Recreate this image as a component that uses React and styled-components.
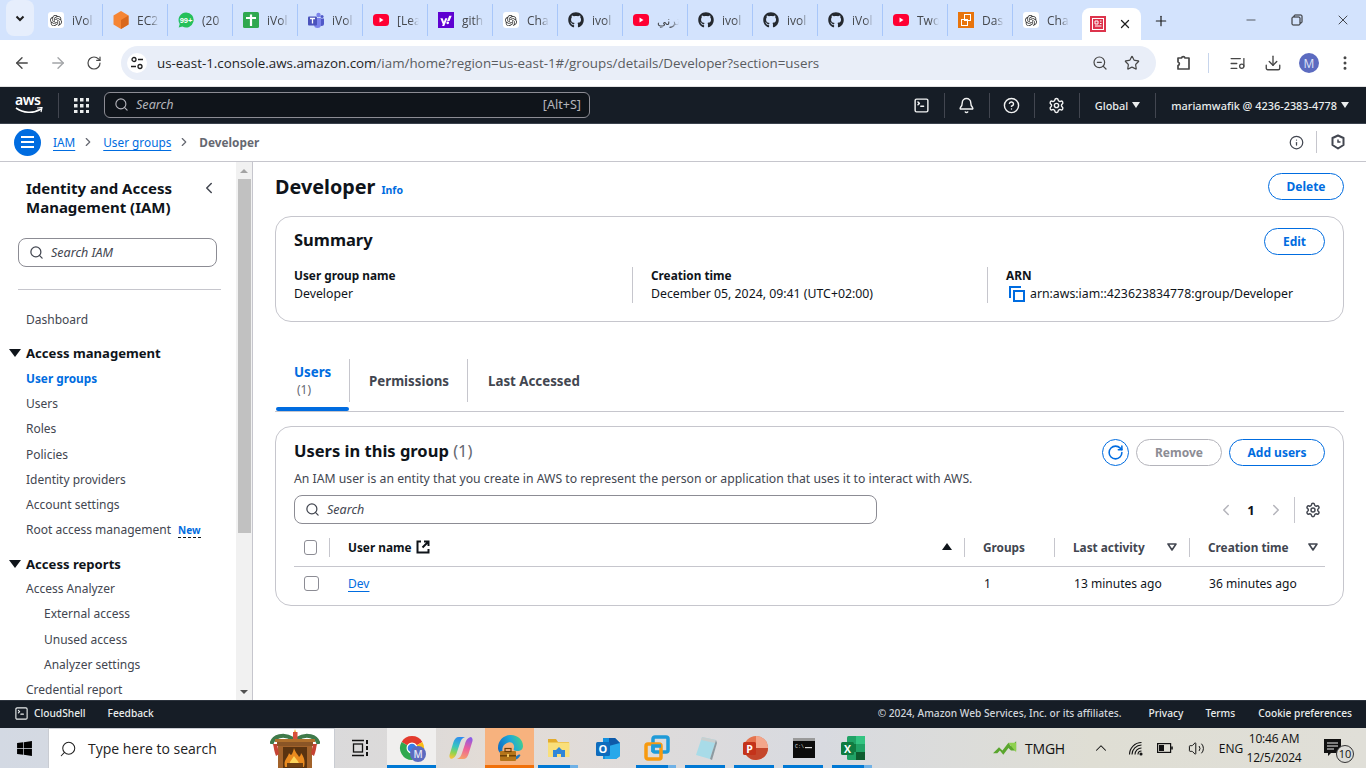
import React from 'react';
import styled, { createGlobalStyle } from 'styled-components';
import {
  ArrowLeft, ArrowRight, RotateCw, ZoomOut, Star, ListMusic, Download, EllipsisVertical,
  Minus, X, Plus, Bell, CircleHelp, Settings, Search, ChevronRight, ChevronLeft, ChevronUp, Info,
  SquareTerminal, Volume2,
} from 'lucide-react';
import { FaGithub, FaWindows, FaYahoo } from 'react-icons/fa';
import { SiOpenai } from 'react-icons/si';

const Global = createGlobalStyle`
  html, body { margin: 0; padding: 0; background: #fff; }
  * { box-sizing: border-box; }
`;

const EMBER = `"Noto Sans", "Open Sans", sans-serif`;
const CHROME = `"Open Sans", "Noto Sans", sans-serif`;

const Page = styled.div`
  width: 1366px;
  height: 768px;
  overflow: hidden;
  display: flex;
  flex-direction: column;
  font-family: ${EMBER};
  color: #0f141a;
`;

/* browser chrome */
const TabStrip = styled.div`
  height: 40px;
  flex: none;
  background: #d3e3fd;
  display: flex;
  align-items: flex-end;
  font-family: ${CHROME};
`;
const TabMenu = styled.div`
  width: 28px;
  height: 36px;
  margin: 0 4px 4px 6px;
  border-radius: 8px;
  background: #e6eefc;
  display: flex;
  align-items: center;
  justify-content: center;
  color: #1f1f1f;
`;
const BrowserTab = styled.div`
  width: 65px;
  height: 32px;
  margin-bottom: 4px;
  padding-left: 10px;
  display: flex;
  align-items: center;
  gap: 8px;
  flex: none;
  font-size: 12px;
  color: #45484d;
  border-right: ${({ $sep }) => ($sep ? '1px solid #a8c7fa' : '1px solid transparent')};
`;
const TabLabel = styled.span`
  width: 22px;
  overflow: hidden;
  white-space: nowrap;
  -webkit-mask-image: linear-gradient(90deg, #000 60%, transparent);
  mask-image: linear-gradient(90deg, #000 60%, transparent);
`;
const ActiveTab = styled.div`
  width: 59px;
  height: 32px;
  margin-left: 4px;
  background: #fff;
  border-radius: 8px 8px 0 0;
  display: flex;
  align-items: center;
  padding-left: 8px;
  gap: 12px;
  color: #1f1f1f;
  flex: none;
`;
const NewTab = styled.div`
  margin: 0 0 11px 12px;
  color: #1f1f1f;
  display: flex;
`;
const WindowButtons = styled.div`
  margin-left: auto;
  display: flex;
  align-self: stretch;
  align-items: center;
`;
const WindowButton = styled.div`
  width: 46px;
  display: flex;
  justify-content: center;
  color: #1f1f1f;
`;
const RestoreIcon = () => (
  <svg width="12" height="12" viewBox="0 0 12 12" fill="none" stroke="#1f1f1f" strokeWidth="1">
    <rect x="1" y="3" width="8" height="8" rx="1" />
    <path d="M3 3V2a1 1 0 0 1 1-1h6a1 1 0 0 1 1 1v6a1 1 0 0 1-1 1H9" />
  </svg>
);

const Toolbar = styled.div`
  height: 47px;
  flex: none;
  background: #fff;
  display: flex;
  align-items: center;
  padding-left: 13px;
  color: #474747;
  border-bottom: 1px solid #e3e3e3;
  font-family: ${CHROME};
`;
const ToolButton = styled.div`
  width: ${({ $w }) => $w || 36}px;
  display: flex;
  justify-content: center;
  color: ${({ $dim }) => ($dim ? '#a3a5a8' : '#474747')};
  flex: none;
`;
const AddressBar = styled.div`
  width: 1035px;
  height: 34px;
  margin-left: 18px;
  border-radius: 17px;
  background: #e9eef8;
  display: flex;
  align-items: center;
  padding: 0 8px 0 6px;
  flex: none;
`;
const SiteChip = styled.div`
  width: 20px;
  height: 20px;
  margin-right: 10px;
  border-radius: 50%;
  background: #fff;
  display: flex;
  align-items: center;
  justify-content: center;
`;
const Url = styled.div`
  font-size: 13.37px;
  color: #5a5c60;
  white-space: nowrap;
  flex: 1;
`;
const UrlHost = styled.span`
  color: #1f1f1f;
`;
const ToolDivider = styled.div`
  width: 1px;
  height: 20px;
  margin-left: -2px;
  margin-right: 1px;
  background: #c7d5ec;
  flex: none;
`;
const Avatar = styled.div`
  width: 20px;
  height: 20px;
  border-radius: 50%;
  background: #5c6bc0;
  color: #dfe3f7;
  font-size: 12px;
  display: flex;
  align-items: center;
  justify-content: center;
`;

/* aws console nav */
const AwsNav = styled.div`
  height: 37px;
  flex: none;
  background: #161d26;
  border-bottom: 1px solid #3a424d;
  display: flex;
  align-items: center;
  color: #e6e8eb;
`;
const AwsLogo = styled.div`
  width: 59px;
  height: 25px;
  padding-left: 15px;
  border-right: 1px solid #424650;
  display: flex;
  flex-direction: column;
  color: #fff;
  font-size: 14px;
  line-height: 14px;
  font-weight: 600;
  letter-spacing: -0.4px;
  flex: none;
`;
const GridButton = styled.div`
  width: 45px;
  display: flex;
  justify-content: center;
  flex: none;
`;
const NavSearch = styled.div`
  width: 486px;
  height: 26px;
  border: 1px solid #8c8c94;
  border-radius: 6px;
  background: #0f141a;
  display: flex;
  align-items: center;
  padding: 0 8px 1px 9px;
  font-size: 12.6px;
  color: #b4b4bb;
  flex: none;
`;
const NavSearchHint = styled.span`
  font-style: italic;
  margin-left: 7px;
  flex: 1;
`;
const NavRight = styled.div`
  margin-left: auto;
  display: flex;
  align-items: center;
  height: 25px;
`;
const NavIcon = styled.div`
  width: 45px;
  height: 25px;
  display: flex;
  align-items: center;
  justify-content: center;
  border-right: 1px solid #424650;
  color: #f2f3f3;
`;
const NavMenu = styled.div`
  height: 25px;
  display: flex;
  align-items: center;
  padding: ${({ $pad }) => $pad};
  font-size: 10.9px;
  font-weight: 500;
  color: #eaeded;
  white-space: nowrap;
  border-right: ${({ $line }) => ($line ? '1px solid #424650' : 'none')};
`;
const Caret = styled.span`
  width: 0;
  height: 0;
  margin-left: 4px;
  border-left: 4px solid transparent;
  border-right: 4px solid transparent;
  border-top: 6px solid #eaeded;
`;

/* breadcrumb */
const Crumbs = styled.div`
  height: 38px;
  flex: none;
  background: #fff;
  border-bottom: 1px solid #c6c6cd;
  display: flex;
  align-items: center;
  padding: 0 0 1px 14px;
  font-size: 11.8px;
`;
const MenuCircle = styled.div`
  width: 27px;
  height: 27px;
  border-radius: 50%;
  background: #006ce0;
  display: flex;
  flex-direction: column;
  align-items: center;
  justify-content: center;
  gap: 3px;
  margin-right: 12px;
`;
const MenuBar = styled.span`
  width: 13px;
  height: 2px;
  background: #fff;
`;
const CrumbLink = styled.a`
  color: #006ce0;
  text-decoration: underline;
  text-underline-offset: 3px;
`;
const CrumbSep = styled.span`
  display: flex;
  color: #656871;
  margin: 0 8px 0 6px;
`;
const CrumbCurrent = styled.span`
  color: #656871;
  font-weight: 700;
`;
const CrumbTools = styled.div`
  margin-left: auto;
  padding-right: 7px;
  display: flex;
  align-items: center;
  height: 22px;
  color: #424650;
`;
const CrumbTool = styled.div`
  width: ${({ $w }) => $w}px;
  height: 22px;
  display: flex;
  align-items: center;
  justify-content: center;
  border-right: ${({ $line }) => ($line ? '1px solid #c6c6cd' : 'none')};
`;

/* body */
const Body = styled.div`
  flex: 1;
  min-height: 0;
  display: flex;
`;
const Sidebar = styled.aside`
  width: 253px;
  flex: none;
  display: flex;
  border-right: 1px solid #c6c6cd;
  overflow: hidden;
`;
const SideNav = styled.nav`
  width: 236px;
  flex: none;
  padding-top: 17px;
  overflow: hidden;
`;
const SideHead = styled.div`
  display: flex;
  justify-content: space-between;
  padding: 0 18px 0 26px;
`;
const SideTitle = styled.div`
  font-size: 15px;
  line-height: 19px;
  font-weight: 700;
  white-space: nowrap;
`;
const SideCollapse = styled.div`
  display: flex;
  color: #424650;
`;
const InputBox = styled.div`
  height: 29px;
  border: 1px solid #8c8c94;
  border-radius: 8px;
  display: flex;
  align-items: center;
  padding-left: 10px;
  color: #424650;
  font-size: 12.5px;
  font-style: italic;
  gap: 7px;
  background: #fff;
`;
const SideSearch = styled(InputBox)`
  width: 199px;
  margin: 21px 0 0 18px;
`;
const SideRule = styled.div`
  height: 1px;
  background: #c6c6cd;
  margin: 22px 15px 17px 18px;
`;
const SideItem = styled.div`
  height: 25.2px;
  line-height: 25.2px;
  font-size: ${({ $active }) => ($active ? 11.8 : 12)}px;
  padding-left: ${({ $indent }) => ($indent ? 44 : 26)}px;
  color: ${({ $active }) => ($active ? '#006ce0' : '#424650')};
  font-weight: ${({ $active }) => ($active ? 700 : 400)};
  white-space: nowrap;
  display: flex;
  align-items: center;
`;
const SideSection = styled.div`
  height: 25.2px;
  margin-top: 8.7px;
  display: flex;
  align-items: center;
  padding-left: 9px;
  font-size: 13.1px;
  font-weight: 700;
  color: #0f141a;
  gap: 5px;
`;
const DownTriangle = styled.span`
  width: 0;
  height: 0;
  border-left: 6px solid transparent;
  border-right: 6px solid transparent;
  border-top: 8px solid #0f141a;
`;
const NewBadge = styled.span`
  color: #006ce0;
  font-size: 10px;
  font-weight: 700;
  margin-left: 7px;
  border-bottom: 1px dashed #0f141a;
  line-height: 13px;
  margin-top: 3px;
`;
const ScrollTrack = styled.div`
  width: 16px;
  flex: none;
  background: #f1f1f1;
  display: flex;
  flex-direction: column;
  align-items: center;
`;
const ScrollUp = styled.div`
  height: 17px;
  width: 100%;
  display: flex;
  align-items: center;
  justify-content: center;
`;
const ScrollThumb = styled.div`
  width: 13px;
  margin-left: 1px;
  height: 354px;
  background: #c1c1c1;
`;
const ScrollDown = styled(ScrollUp)`
  margin-top: auto;
`;
const ArrowUp = styled.span`
  border-left: 4px solid transparent;
  border-right: 4px solid transparent;
  border-bottom: 4px solid #a3a3a3;
`;
const ArrowDown = styled.span`
  border-left: 4px solid transparent;
  border-right: 4px solid transparent;
  border-top: 4px solid #505050;
`;

const Main = styled.main`
  flex: 1;
  min-width: 0;
  padding: 11px 22px 0;
  background: #fff;
`;
const TitleRow = styled.div`
  height: 27px;
  display: flex;
  align-items: center;
`;
const PageTitle = styled.h1`
  margin: 0;
  font-size: 19.8px;
  line-height: 27px;
  font-weight: 700;
`;
const InfoLink = styled.a`
  color: #006ce0;
  font-size: 10.5px;
  font-weight: 700;
  margin: 7px 0 0 6px;
`;
const PillButton = styled.button`
  height: 27px;
  width: ${({ $w }) => $w}px;
  margin-left: ${({ $ml }) => $ml || 0}px;
  border-radius: 14px;
  border: 1px solid ${({ $off }) => ($off ? '#b4b4bb' : '#006ce0')};
  background: #fff;
  color: ${({ $off }) => ($off ? '#8c8c94' : '#006ce0')};
  font: 700 12px ${EMBER};
  padding: 0;
  flex: none;
`;
const PushRight = styled.div`
  margin-left: auto;
  display: flex;
  align-items: center;
`;
const Card = styled.section`
  border: 1px solid #c6c6cd;
  border-radius: 16px;
  background: #fff;
  padding: 11px 18px 0;
`;
const SummaryCard = styled(Card)`
  height: 106px;
  margin-top: 16px;
`;
const CardHead = styled.div`
  height: 27px;
  display: flex;
  align-items: center;
`;
const CardTitle = styled.h2`
  margin: 0 0 3px;
  font-size: 16.5px;
  line-height: 24px;
  font-weight: 700;
`;
const Count = styled.span`
  font-weight: 400;
  color: #656871;
`;
const Fields = styled.div`
  margin-top: 12px;
  display: grid;
  grid-template-columns: 338px 355px 1fr;
  height: 36px;
`;
const Field = styled.div`
  border-left: ${({ $line }) => ($line ? '1px solid #c6c6cd' : 'none')};
  padding-left: ${({ $line }) => ($line ? '18px' : '0')};
  font-size: 12.3px;
  line-height: 18px;
`;
const FieldLabel = styled.div`
  font-weight: 700;
  font-size: 11.8px;
  line-height: 16px;
  margin-bottom: 2px;
`;
const FieldValue = styled.div`
  display: flex;
  align-items: center;
  white-space: nowrap;
`;
const CopyMark = styled.span`
  display: flex;
  margin: 0 5px 0 3px;
`;
const TabBar = styled.div`
  margin-top: 37px;
  height: 53px;
  border-bottom: 1px solid #c6c6cd;
  display: flex;
  align-items: flex-start;
`;
const ConsoleTab = styled.div`
  height: 52px;
  position: relative;
  display: flex;
  flex-direction: column;
  justify-content: ${({ $active }) => ($active ? 'flex-start' : 'center')};
  padding: ${({ $active, $pl }) => ($active ? '4px 0 0 18px' : `0 0 8px ${$pl}px`)};
  width: ${({ $w }) => $w}px;
  font-size: 13.3px;
  font-weight: 700;
  color: ${({ $active }) => ($active ? '#006ce0' : '#424650')};
  flex: none;
  margin-left: ${({ $active }) => ($active ? '1px' : '0')};
`;
const TabDivider = styled.div`
  width: 1px;
  height: 43px;
  background: #c6c6cd;
  flex: none;
`;
const TabCount = styled.span`
  font-weight: 400;
  font-size: 12px;
  line-height: 17px;
  color: #656871;
  padding-left: 3px;
`;
const TabMarker = styled.span`
  position: absolute;
  left: 0;
  right: 0;
  bottom: 0;
  height: 4px;
  background: #006ce0;
  border-radius: 2px;
`;
const UsersCard = styled(Card)`
  margin-top: 14px;
  padding: 12px 18px 5px;
`;
const RoundIcon = styled.div`
  width: 27px;
  height: 27px;
  border-radius: 50%;
  border: 1px solid #006ce0;
  color: #006ce0;
  display: flex;
  align-items: center;
  justify-content: center;
`;
const Description = styled.p`
  margin: 3px 0 0;
  font-size: 12.24px;
  line-height: 20px;
  color: #424650;
`;
const FilterRow = styled.div`
  display: flex;
  align-items: center;
  margin-top: 6px;
  height: 29px;
`;
const TableSearch = styled(InputBox)`
  width: 583px;
`;
const Pager = styled.div`
  margin-left: auto;
  display: flex;
  align-items: center;
  font-size: 13px;
  font-weight: 700;
  color: #b4b4bb;
`;
const PagerNumber = styled.span`
  color: #0f141a;
  width: 32px;
  text-align: center;
`;
const PagerGear = styled.div`
  margin-left: 9px;
  width: 31px;
  height: 26px;
  border-left: 1px solid #c6c6cd;
  color: #424650;
  display: flex;
  align-items: center;
  justify-content: flex-end;
  padding-right: 4px;
`;
const Row = styled.div`
  display: grid;
  grid-template-columns: 36px 635px 90px 135px 135px;
  align-items: center;
`;
const HeadRow = styled(Row)`
  margin-top: 5px;
  height: 38px;
  border-bottom: 1px solid #c6c6cd;
  font-size: 11.8px;
  font-weight: 700;
  color: #424650;
`;
const BodyRow = styled(Row)`
  height: 33px;
  font-size: 12.05px;
  color: #0f141a;
`;
const HeadCell = styled.div`
  height: 19px;
  display: flex;
  align-items: center;
  padding: 0 ${({ $end }) => ($end ? 7 : 12)}px ${({ $first }) => ($first ? 0 : 2)}px ${({ $first }) => ($first ? 10 : 18)}px;
  border-right: ${({ $end }) => ($end ? 'none' : '1px solid #c6c6cd')};
  white-space: nowrap;
  color: ${({ $strong }) => ($strong ? '#0f141a' : '#424650')};
`;
const BodyCell = styled.div`
  padding-left: ${({ $first }) => ($first ? 10 : 19)}px;
  white-space: nowrap;
`;
const NameCell = styled(BodyCell)`
  padding-left: 18px;
`;
const Check = styled.span`
  display: block;
  width: 15px;
  height: 15px;
  border: 1.5px solid #8c8c94;
  border-radius: 3px;
  background: #fff;
`;
const DevLink = styled.a`
  color: #006ce0;
  text-decoration: underline;
  text-underline-offset: 3px;
`;
const SortUp = styled.span`
  margin-left: auto;
  border-left: 5px solid transparent;
  border-right: 5px solid transparent;
  border-bottom: 7px solid #0f141a;
`;
const SortDown = styled.svg`
  margin-left: auto;
  flex: none;
`;
const OutLink = styled.svg`
  margin-left: 4px;
  flex: none;
`;

/* footer */
const Footer = styled.footer`
  height: 28px;
  flex: none;
  background: #161d26;
  border-top: 1px solid #2c333d;
  display: flex;
  align-items: center;
  padding: 0 14px 3px;
  font-size: 10.2px;
  font-weight: 500;
  color: #eaeded;
`;
const FooterItem = styled.span`
  display: flex;
  align-items: center;
  gap: 5px;
  margin-left: ${({ $ml }) => $ml || 0}px;
  white-space: nowrap;
  color: ${({ $dim }) => ($dim ? '#d1d5db' : '#eaeded')};
`;

/* windows taskbar */
const Taskbar = styled.div`
  height: 40px;
  flex: none;
  display: flex;
  align-items: stretch;
  background: linear-gradient(90deg, #d3d9e3 0%, #dcdad9 30%, #e3dcd6 36%, #d8dae0 60%, #dfded4 80%, #e0dfd8 100%);
  font-family: ${CHROME};
  color: #111;
`;
const StartButton = styled.div`
  width: 48px;
  display: flex;
  align-items: center;
  justify-content: center;
  flex: none;
`;
const TaskSearch = styled.div`
  width: 287px;
  background: #fff;
  border: 1px solid #c9ccd2;
  border-bottom: none;
  display: flex;
  align-items: center;
  padding-left: 10px;
  font-size: 14px;
  color: #222;
  flex: none;
`;
const TaskSearchText = styled.span`
  margin-left: 11px;
  flex: 1;
`;
const FireGap = styled.span`
  width: 14px;
  flex: none;
`;
const TaskView = styled.div`
  width: 52px;
  display: flex;
  align-items: center;
  justify-content: center;
  flex: none;
`;
const TaskApp = styled.div`
  width: 49px;
  display: flex;
  align-items: center;
  justify-content: center;
  flex: none;
  position: relative;
  background: ${({ $bg }) => $bg || 'transparent'};
`;
const TaskLine = styled.span`
  position: absolute;
  bottom: 0;
  height: 3px;
  left: ${({ $full }) => ($full ? 0 : 4)}px;
  right: ${({ $full }) => ($full ? 0 : 5)}px;
  background: ${({ $color, $stack }) => ($stack
    ? `linear-gradient(90deg, ${$color} 80%, #6fb1e6 80%)`
    : $color)};
`;
const Tray = styled.div`
  margin-left: auto;
  display: flex;
  align-items: center;
  font-size: 12px;
`;
const TrayStock = styled.div`
  display: flex;
  align-items: center;
  gap: 8px;
  font-size: 14px;
  margin-right: 19px;
  letter-spacing: -0.2px;
`;
const TraySlot = styled.div`
  width: ${({ $w }) => $w}px;
  display: flex;
  justify-content: center;
  flex: none;
`;
const Clock = styled.div`
  width: 52px;
  margin-right: 8px;
  text-align: center;
  line-height: 19px;
  font-size: 12px;
  letter-spacing: -0.2px;
  white-space: nowrap;
  display: flex;
  flex-direction: column;
  align-items: center;
`;
const Notify = styled.div`
  width: 50px;
  position: relative;
  display: flex;
  justify-content: center;
  margin-right: 8px;
`;
const NotifyBadge = styled.span`
  position: absolute;
  left: 28px;
  top: 6px;
  width: 18px;
  height: 18px;
  border-radius: 50%;
  background: #dcdcd8;
  border: 1px solid #333;
  font-size: 11px;
  line-height: 16px;
  text-align: center;
`;

const Favicon = ({ kind }) => {
  if (kind === 'gpt') {
    return (
      <svg width="16" height="16" viewBox="0 0 16 16">
        <rect width="16" height="16" rx="3" fill="#fff" />
        <foreignObject x="2" y="2" width="12" height="12"><SiOpenai size={12} color="#333" /></foreignObject>
      </svg>
    );
  }
  if (kind === 'ec2') {
    return (
      <svg width="16" height="18" viewBox="0 0 16 18">
        <path d="M8 0l7.5 4.5v9L8 18 .5 13.5v-9z" fill="#f58534" />
        <path d="M8 9l7.5-4.5v9L8 18z" fill="#d9681d" />
      </svg>
    );
  }
  if (kind === 'wa') {
    return (
      <svg width="16" height="16" viewBox="0 0 16 16">
        <path d="M8 .5a7.5 7.5 0 1 1-3.6 14L.7 15.5l1-3.6A7.5 7.5 0 0 1 8 .5z" fill="#25c05a" />
        <text x="8" y="10.5" fontSize="7.5" fontWeight="700" fill="#fff" textAnchor="middle" fontFamily="Liberation Sans, sans-serif">99+</text>
      </svg>
    );
  }
  if (kind === 'sheet') {
    return (
      <svg width="16" height="16" viewBox="0 0 16 16">
        <rect width="16" height="16" rx="1.5" fill="#2fa84f" />
        <path d="M3 6h10M8 2.5V14" stroke="#fff" strokeWidth="2.2" />
      </svg>
    );
  }
  if (kind === 'teams') {
    return (
      <svg width="16" height="16" viewBox="0 0 16 16">
        <circle cx="10.5" cy="3" r="2.2" fill="#7b83eb" />
        <circle cx="14" cy="4.5" r="1.6" fill="#5059c9" />
        <path d="M11 6.5h5v5a2.5 2.5 0 0 1-5 0z" fill="#5059c9" />
        <path d="M5 6h8v6.5a3.5 3.5 0 0 1-7 0z" fill="#7b83eb" />
        <rect x="0" y="4.5" width="9" height="9" rx="1" fill="#4b53bc" />
        <path d="M2 6.500h5M4.500 6.500v5" stroke="#fff" strokeWidth="1.3" />
      </svg>
    );
  }
  if (kind === 'yt') {
    return (
      <svg width="16" height="16" viewBox="0 0 16 16">
        <rect y="2" width="16" height="12" rx="3.5" fill="#ff0033" />
        <path d="M6.500 5.500L10.500 8l-4 2.500z" fill="#fff" />
      </svg>
    );
  }
  if (kind === 'yahoo') {
    return (
      <svg width="16" height="16" viewBox="0 0 16 16">
        <rect width="16" height="16" fill="#5f01d1" />
        <foreignObject x="2" y="2" width="12" height="12"><FaYahoo size={12} color="#fff" /></foreignObject>
      </svg>
    );
  }
  if (kind === 'gh') return <FaGithub size={16} color="#24292f" />;
  if (kind === 'das') {
    return (
      <svg width="16" height="16" viewBox="0 0 16 16">
        <rect width="16" height="16" fill="#e8740c" />
        <g fill="none" stroke="#fff" strokeWidth="1">
          <rect x="6.5" y="2.5" width="6" height="6" />
          <rect x="3.5" y="7.5" width="6" height="6" />
        </g>
      </svg>
    );
  }
  return (
    <svg width="16" height="16" viewBox="0 0 16 16" style={{ flex: 'none' }}>
      <rect width="16" height="16" fill="#dd344c" />
      <g fill="none" stroke="#fff" strokeWidth="1">
        <rect x="2.5" y="2.5" width="11" height="11" />
        <path d="M5 5h3v3H5zM10 5h1.500M5 10h6.500M10 7.500h1.500" />
      </g>
    </svg>
  );
};

const TAB_LIST = [
  ['gpt', 'iVol'], ['ec2', 'EC2'], ['wa', '(20'], ['sheet', 'iVol'], ['teams', 'iVol'], ['yt', '[Lea'],
  ['yahoo', 'gith'], ['gpt', 'Cha'], ['gh', 'ivol'], ['yt', 'ترني'], ['gh', 'ivol'], ['gh', 'ivol'],
  ['gh', 'iVol'], ['yt', 'Two'], ['das', 'Das'], ['gpt', 'Cha'],
];

const SiteTune = () => (
  <svg width="14" height="14" viewBox="0 0 14 14" fill="none" stroke="#1f1f1f" strokeWidth="1.3">
    <circle cx="4" cy="3.5" r="2" />
    <path d="M8 3.5h5M1 10.5h5" />
    <circle cx="10" cy="10.5" r="2" />
  </svg>
);
const ExtensionIcon = () => (
  <svg width="18" height="18" viewBox="0 0 18 18" fill="none" stroke="#474747" strokeWidth="1.7" strokeLinejoin="round">
    <path d="M4 4h3.500a1.800 1.800 0 0 1 3.500 0H15v11H4v-3.500a1.800 1.800 0 0 0 0-3.500z" />
  </svg>
);
const CopyIcon = () => (
  <svg width="16" height="16" viewBox="0 0 16 16" fill="none" stroke="#006ce0" strokeWidth="2">
    <rect x="5" y="5" width="10" height="10" />
    <path d="M1 12V1h11" />
  </svg>
);
const OutLinkIcon = () => (
  <OutLink width="14" height="14" viewBox="0 0 14 14" fill="none" stroke="#0f141a" strokeWidth="2">
    <path d="M5 1.500H1.500v11h11V9" />
    <path d="M8 1.500h4.500V6M12.500 1.500L6.500 7.500" />
  </OutLink>
);
const WifiIcon = () => (
  <svg width="16" height="16" viewBox="0 0 16 16" fill="none" stroke="#111" strokeWidth="1.1">
    <path d="M2.500 14.500A12 12 0 0 1 14.500 2.500" />
    <path d="M5 14.500a9.500 9.500 0 0 1 9.500-9.500" />
    <path d="M8 14.500a6.500 6.500 0 0 1 6.500-6.500" />
    <path d="M11 14.500a3.500 3.500 0 0 1 3.500-3.500" />
    <circle cx="14" cy="14" r="1" fill="#111" />
  </svg>
);

const ChromeApp = () => (
  <svg width="30" height="30" viewBox="0 0 30 30">
    <circle cx="15" cy="15" r="12" fill="#fff" />
    <g fill="none" strokeWidth="7">
      <path d="M7.64 10.750A8.500 8.500 0 0 1 22.360 10.750" stroke="#e33b2e" />
      <path d="M22.360 10.750A8.500 8.500 0 0 1 15 23.500" stroke="#f9bc15" />
      <path d="M15 23.500A8.500 8.500 0 0 1 7.640 10.750" stroke="#2fa84f" />
    </g>
    <circle cx="15" cy="15" r="5.500" fill="#fff" />
    <circle cx="15" cy="15" r="4.300" fill="#3a7de8" />
    <circle cx="21" cy="21" r="8" fill="#5c6bc0" />
    <text x="21" y="25" fontSize="10" fontWeight="600" fill="#e3e5f5" textAnchor="middle" fontFamily="Open Sans, sans-serif">M</text>
  </svg>
);
const CopilotApp = () => (
  <svg width="26" height="26" viewBox="0 0 26 26">
    <defs>
      <linearGradient id="cpA" x1="0.6" y1="0" x2="0.4" y2="1">
        <stop offset="0" stopColor="#2f8cf0" /><stop offset="0.45" stopColor="#36c6c0" /><stop offset="0.75" stopColor="#8ed44e" /><stop offset="1" stopColor="#f5c33b" />
      </linearGradient>
      <linearGradient id="cpB" x1="0.6" y1="0" x2="0.4" y2="1">
        <stop offset="0" stopColor="#f6a06a" /><stop offset="0.5" stopColor="#ec5f9b" /><stop offset="1" stopColor="#8a5be8" />
      </linearGradient>
    </defs>
    <path d="M11 2h6c-3 1-4 3-5 6l-3 9c-1 4-3 7-7 7H4c-2 0-3-2-2.500-4l4-13C6.500 4 8 2 11 2z" fill="url(#cpA)" />
    <path d="M11 2h6c-3 1-4 3-5 6l-3 9c-1 4-3 7-7 7H4c-2 0-3-2-2.500-4l4-13C6.500 4 8 2 11 2z" fill="url(#cpB)" transform="rotate(180 13 13)" />
  </svg>
);
const EdgeApp = () => (
  <svg width="30" height="30" viewBox="0 0 30 30">
    <defs>
      <linearGradient id="edgeA" x1="0" y1="0.6" x2="1" y2="0.3">
        <stop offset="0" stopColor="#0f6fc4" /><stop offset="0.55" stopColor="#1fa8d8" /><stop offset="1" stopColor="#45d08a" />
      </linearGradient>
    </defs>
    <path d="M3 15C3 7 9 2 16 2c7 0 12 5 12 11 0 3-2 5-6 5-3 0-4-1-3-3 1-4-3-7-7-5-5 2-6 8-3 12-4-1-6-4-6-7z" fill="url(#edgeA)" />
    <path d="M20 27c-4 1-8 0-10-2 5 1 9 0 13-3 2-1 3 0 2 1-1 2-3 3-5 4z" fill="#1a78c2" />
    <rect x="5" y="18" width="16" height="10" rx="1" fill="#b5751a" />
    <rect x="10" y="15.500" width="6" height="3" fill="none" stroke="#6b3f08" strokeWidth="1.2" />
    <rect x="5" y="22" width="16" height="1.500" fill="#6e4208" />
    <rect x="12" y="21" width="2" height="3" fill="#f0c35a" />
  </svg>
);
const FilesApp = () => (
  <svg width="22" height="20" viewBox="0 0 22 20">
    <path d="M0 1h8l2 3h11v15H0z" fill="#e3ab2c" />
    <rect x="0" y="4.500" width="21.500" height="14.500" fill="#f9df7a" />
    <path d="M5 19v-7h3l3-3 3 3h3v7h-4v-3H9v3z" fill="#2f86d8" />
  </svg>
);
const OutlookApp = () => (
  <svg width="26" height="26" viewBox="0 0 26 26">
    <path d="M8 3h12l5 5v13l-4 3H8z" fill="#1490df" />
    <path d="M14 3h6l5 5v7H14z" fill="#0f5aa8" />
    <path d="M10 12l15-4v13l-4 3H10z" fill="#28a8ea" />
    <rect x="1" y="7" width="14" height="14" rx="1.500" fill="#0f6cbd" />
    <text x="8" y="18" fontSize="11" fontWeight="700" fill="#fff" textAnchor="middle" fontFamily="Open Sans, sans-serif">O</text>
  </svg>
);
const VmwareApp = () => (
  <svg width="26" height="26" viewBox="0 0 26 26" fill="none" strokeWidth="3.500">
    <rect x="9" y="2" width="15" height="15" rx="2" stroke="#1f9bd8" />
    <rect x="2" y="9" width="15" height="15" rx="2" stroke="#f79a10" />
    <path d="M9 17V11h8" stroke="#1f9bd8" />
  </svg>
);
const NotepadApp = () => (
  <svg width="24" height="26" viewBox="0 0 24 26">
    <path d="M8 2l14 3-6 19-14-4z" fill="#a8dbe8" />
    <path d="M8 2l14 3-1 3L7 5z" fill="#c9cfcf" />
    <path d="M22 5l1 3-5 17-2-1z" fill="#8d9aa0" />
  </svg>
);
const PowerPointApp = () => (
  <svg width="26" height="26" viewBox="0 0 26 26">
    <circle cx="14" cy="13" r="12" fill="#e5734e" />
    <path d="M14 13V1a12 12 0 0 1 12 12z" fill="#f3a68b" />
    <path d="M2 13h24a12 12 0 0 1-24 0z" fill="#c4462b" />
    <rect x="1" y="7" width="13" height="13" rx="1.500" fill="#c4331a" />
    <text x="7.500" y="17.500" fontSize="10.500" fontWeight="700" fill="#fff" textAnchor="middle" fontFamily="Open Sans, sans-serif">P</text>
  </svg>
);
const CmdApp = () => (
  <svg width="22" height="20" viewBox="0 0 22 20">
    <rect width="22" height="20" fill="#0c0c0c" />
    <rect width="22" height="3" fill="#9a9a9a" />
    <text x="2" y="9.500" fontSize="5" fill="#ddd" fontFamily="Liberation Mono, monospace">C:\</text>
    <rect x="12" y="9" width="7" height="1.200" fill="#ddd" />
  </svg>
);
const ExcelApp = () => (
  <svg width="26" height="26" viewBox="0 0 26 26">
    <rect x="7" y="1" width="18" height="24" rx="1.500" fill="#21a366" />
    <rect x="16" y="1" width="9" height="8" fill="#33c481" />
    <rect x="7" y="9" width="9" height="8" fill="#107c41" />
    <rect x="16" y="17" width="9" height="8" fill="#0e5c2f" />
    <rect x="1" y="7" width="13" height="13" rx="1.500" fill="#107c41" />
    <text x="7.500" y="17.500" fontSize="10.500" fontWeight="700" fill="#fff" textAnchor="middle" fontFamily="Open Sans, sans-serif">X</text>
  </svg>
);
const Fireplace = () => (
  <svg width="50" height="39" viewBox="0 0 50 39" style={{ flex: 'none' }}>
    <path d="M1.500 15C3 7 14 4 23 10M48.500 15C47 7 36 4 27 10" stroke="#3f7a4a" strokeWidth="4" fill="none" />
    <rect x="23" y="3" width="4.500" height="8" fill="#d8503c" />
    <path d="M25 0l1 3h-2z" fill="#f0b13a" />
    <rect x="5" y="10" width="40" height="3" fill="#b0702c" />
    <rect x="7" y="13" width="36" height="4" fill="#8a5526" />
    <rect x="8" y="17" width="34" height="22" fill="#a2622a" />
    <rect x="13" y="18" width="24" height="21" fill="#5a3310" />
    <path d="M15 38c-2-7 3-9 4-14 2 3 3 3 5-5 2 6 4 6 5 9 1-1 2-2 2-4 4 5 4 10 3 14z" fill="#e98a1f" />
    <path d="M19 38c0-6 3-7 5-11 2 4 6 5 5 11z" fill="#fbd45a" />
    <rect x="17" y="34" width="16" height="4" fill="#6e3f12" />
    <path d="M3 15c1 4 1 7 3 12l3-2-2-10zM47 15c-1 4-1 7-3 12l-3-2 2-10z" fill="#c64433" />
  </svg>
);
const StockIcon = () => (
  <svg width="24" height="18" viewBox="0 0 28 18">
    <path d="M0 15l7-7 4 4 7-9 3 4 6-6v11l-6 0-3-3-6 8-4-5-3 3z" fill="#5aa62e" />
    <path d="M18 3h9v11z" fill="#8fd14f" />
  </svg>
);
const ChevronDownMark = () => (
  <svg width="12" height="12" viewBox="0 0 12 12" fill="none" stroke="#1f1f1f" strokeWidth="2">
    <path d="M2.500 4.500L6 8l3.500-3.500" />
  </svg>
);
const NineDots = () => {
  const spots = [0, 6, 12];
  return (
    <svg width="15" height="15" viewBox="0 0 15 15" fill="#eaeded">
      {spots.map((y) => spots.map((x) => <rect key={`${x}-${y}`} x={x} y={y} width="3.5" height="3.5" />))}
    </svg>
  );
};
const ShieldClock = () => (
  <svg width="16" height="16" viewBox="0 0 16 16" fill="none" stroke="#424650" strokeWidth="2">
    <path d="M8 1.500l5.500 2.500v7L8 14.500 2.500 11V4z" strokeLinejoin="round" />
    <path d="M8 5.500V8h2.500" strokeWidth="1.500" />
  </svg>
);
const TaskViewIcon = () => (
  <svg width="18" height="18" viewBox="0 0 18 18" fill="none" stroke="#111" strokeWidth="1.3">
    <path d="M0 1.500h12M0 16.500h12" />
    <rect x="1.5" y="5" width="9" height="8" />
    <path d="M15 1v4M15 7v4M15 13v4" strokeWidth="2" />
  </svg>
);
const BatteryIcon = () => (
  <svg width="16" height="10" viewBox="0 0 16 10" fill="none" stroke="#111" strokeWidth="1.2">
    <rect x="0.6" y="0.6" width="13" height="8.8" />
    <rect x="2" y="2" width="5" height="6" fill="#111" stroke="none" />
    <path d="M15 3.500v3" strokeWidth="1.6" />
  </svg>
);
const NotifyIcon = () => (
  <svg width="18" height="18" viewBox="0 0 18 18">
    <path d="M0 0h17v14H7l-3 3v-3H0z" fill="#111" />
    <path d="M3 4h11M3 7h11M3 10h7" stroke="#eee" strokeWidth="1" />
  </svg>
);
const SortOpen = () => (
  <SortDown width="10" height="8" viewBox="0 0 10 8">
    <path d="M1 1h8L5 7z" fill="none" stroke="#424650" strokeWidth="1.6" strokeLinejoin="round" />
  </SortDown>
);

const BLUE_LINE = '#0078d4';
const APPS = [
  { icon: <ChromeApp />, bg: '#f0efee', line: BLUE_LINE, full: true },
  { icon: <CopilotApp /> },
  { icon: <EdgeApp />, bg: '#f7b27e', line: '#f0700a', full: true },
  { icon: <FilesApp />, line: BLUE_LINE, stack: true },
  { icon: <OutlookApp /> },
  { icon: <VmwareApp />, line: BLUE_LINE, stack: true },
  { icon: <NotepadApp />, line: BLUE_LINE },
  { icon: <PowerPointApp />, line: BLUE_LINE },
  { icon: <CmdApp />, line: BLUE_LINE },
  { icon: <ExcelApp />, line: BLUE_LINE, stack: true },
];

export default function App() {
  return (
    <Page>
      <Global />
      <TabStrip>
        <TabMenu><ChevronDownMark /></TabMenu>
        {TAB_LIST.map(([kind, label], i) => (
          <BrowserTab key={i} $sep={i !== 15}>
            <Favicon kind={kind} />
            <TabLabel>{label}</TabLabel>
          </BrowserTab>
        ))}
        <ActiveTab>
          <Favicon kind="iam" />
          <X size={14} strokeWidth={2.2} />
        </ActiveTab>
        <NewTab><Plus size={16} strokeWidth={1.8} /></NewTab>
        <WindowButtons>
          <WindowButton><Minus size={14} strokeWidth={1.2} /></WindowButton>
          <WindowButton><RestoreIcon /></WindowButton>
          <WindowButton><X size={16} strokeWidth={1.2} /></WindowButton>
        </WindowButtons>
      </TabStrip>

      <Toolbar>
        <ToolButton $w={18}><ArrowLeft size={18} strokeWidth={1.8} /></ToolButton>
        <ToolButton $w={54} $dim><ArrowRight size={18} strokeWidth={1.8} /></ToolButton>
        <ToolButton $w={18}><RotateCw size={16} strokeWidth={1.8} /></ToolButton>
        <AddressBar>
          <SiteChip><SiteTune /></SiteChip>
          <Url><UrlHost>us-east-1.console.aws.amazon.com</UrlHost>/iam/home?region=us-east-1#/groups/details/Developer?section=users</Url>
          <ToolButton $w={32}><ZoomOut size={16} strokeWidth={1.8} /></ToolButton>
          <ToolButton $w={32}><Star size={16} strokeWidth={1.8} /></ToolButton>
        </AddressBar>
        <ToolButton $w={54}><ExtensionIcon /></ToolButton>
        <ToolDivider />
        <ToolButton $w={54}><ListMusic size={17} strokeWidth={1.8} /></ToolButton>
        <ToolButton $w={18}><Download size={18} strokeWidth={1.8} /></ToolButton>
        <ToolButton $w={54}><Avatar>M</Avatar></ToolButton>
        <ToolButton $w={18}><EllipsisVertical size={18} strokeWidth={2} /></ToolButton>
      </Toolbar>

      <AwsNav>
        <AwsLogo>
          <span>aws</span>
          <svg width="28" height="9" viewBox="0 0 28 9" fill="none">
            <path d="M1 1c7 5 17 6 25 1" stroke="#fff" strokeWidth="1.6" />
            <path d="M22 1l5-.5-1 4.500" stroke="#fff" strokeWidth="1.2" />
          </svg>
        </AwsLogo>
        <GridButton><NineDots /></GridButton>
        <NavSearch>
          <Search size={15} strokeWidth={1.8} />
          <NavSearchHint>Search</NavSearchHint>
          <span>[Alt+S]</span>
        </NavSearch>
        <NavRight>
          <NavIcon><SquareTerminal size={17} strokeWidth={2} /></NavIcon>
          <NavIcon><Bell size={17} strokeWidth={2} /></NavIcon>
          <NavIcon><CircleHelp size={17} strokeWidth={2} /></NavIcon>
          <NavIcon><Settings size={17} strokeWidth={2} /></NavIcon>
          <NavMenu $line $pad="0 15px 0 15px">Global<Caret /></NavMenu>
          <NavMenu $pad="0 17px 0 15px">mariamwafik @ 4236-2383-4778<Caret /></NavMenu>
        </NavRight>
      </AwsNav>

      <Crumbs>
        <MenuCircle><MenuBar /><MenuBar /><MenuBar /></MenuCircle>
        <CrumbLink>IAM</CrumbLink>
        <CrumbSep><ChevronRight size={14} strokeWidth={2} /></CrumbSep>
        <CrumbLink>User groups</CrumbLink>
        <CrumbSep><ChevronRight size={14} strokeWidth={2} /></CrumbSep>
        <CrumbCurrent>Developer</CrumbCurrent>
        <CrumbTools>
          <CrumbTool $w={41} $line><Info size={15} strokeWidth={2} /></CrumbTool>
          <CrumbTool $w={42}><ShieldClock /></CrumbTool>
        </CrumbTools>
      </Crumbs>

      <Body>
        <Sidebar>
          <SideNav>
            <SideHead>
              <SideTitle>Identity and Access<br />Management (IAM)</SideTitle>
              <SideCollapse><ChevronLeft size={18} strokeWidth={2} /></SideCollapse>
            </SideHead>
            <SideSearch><Search size={15} strokeWidth={2} />Search IAM</SideSearch>
            <SideRule />
            <SideItem>Dashboard</SideItem>
            <SideSection><DownTriangle />Access management</SideSection>
            <SideItem $active>User groups</SideItem>
            <SideItem>Users</SideItem>
            <SideItem>Roles</SideItem>
            <SideItem>Policies</SideItem>
            <SideItem>Identity providers</SideItem>
            <SideItem>Account settings</SideItem>
            <SideItem>Root access management<NewBadge>New</NewBadge></SideItem>
            <SideSection><DownTriangle />Access reports</SideSection>
            <SideItem>Access Analyzer</SideItem>
            <SideItem $indent>External access</SideItem>
            <SideItem $indent>Unused access</SideItem>
            <SideItem $indent>Analyzer settings</SideItem>
            <SideItem>Credential report</SideItem>
          </SideNav>
          <ScrollTrack>
            <ScrollUp><ArrowUp /></ScrollUp>
            <ScrollThumb />
            <ScrollDown><ArrowDown /></ScrollDown>
          </ScrollTrack>
        </Sidebar>

        <Main>
          <TitleRow>
            <PageTitle>Developer</PageTitle>
            <InfoLink>Info</InfoLink>
            <PushRight><PillButton $w={76}>Delete</PillButton></PushRight>
          </TitleRow>

          <SummaryCard>
            <CardHead>
              <CardTitle>Summary</CardTitle>
              <PushRight><PillButton $w={61}>Edit</PillButton></PushRight>
            </CardHead>
            <Fields>
              <Field>
                <FieldLabel>User group name</FieldLabel>
                <FieldValue>Developer</FieldValue>
              </Field>
              <Field $line>
                <FieldLabel>Creation time</FieldLabel>
                <FieldValue>December 05, 2024, 09:41 (UTC+02:00)</FieldValue>
              </Field>
              <Field $line>
                <FieldLabel>ARN</FieldLabel>
                <FieldValue>
                  <CopyMark><CopyIcon /></CopyMark>
                  arn:aws:iam::423623834778:group/Developer
                </FieldValue>
              </Field>
            </Fields>
          </SummaryCard>

          <TabBar>
            <ConsoleTab $active $w={73}>
              Users
              <TabCount>(1)</TabCount>
              <TabMarker />
            </ConsoleTab>
            <TabDivider />
            <ConsoleTab $w={117} $pl={19}>Permissions</ConsoleTab>
            <TabDivider />
            <ConsoleTab $w={130} $pl={20}>Last Accessed</ConsoleTab>
          </TabBar>

          <UsersCard>
            <CardHead>
              <CardTitle>Users in this group <Count>(1)</Count></CardTitle>
              <PushRight>
                <RoundIcon><RotateCw size={17} strokeWidth={2.2} /></RoundIcon>
                <PillButton $w={86} $ml={7} $off>Remove</PillButton>
                <PillButton $w={96} $ml={7}>Add users</PillButton>
              </PushRight>
            </CardHead>
            <Description>An IAM user is an entity that you create in AWS to represent the person or application that uses it to interact with AWS.</Description>
            <FilterRow>
              <TableSearch><Search size={15} strokeWidth={2} />Search</TableSearch>
              <Pager>
                <ChevronLeft size={18} strokeWidth={2} />
                <PagerNumber>1</PagerNumber>
                <ChevronRight size={18} strokeWidth={2} />
                <PagerGear><Settings size={16} strokeWidth={2.2} /></PagerGear>
              </Pager>
            </FilterRow>
            <HeadRow>
              <HeadCell $first><Check /></HeadCell>
              <HeadCell $strong>
                User name<OutLinkIcon />
                <SortUp />
              </HeadCell>
              <HeadCell>Groups</HeadCell>
              <HeadCell>Last activity<SortOpen /></HeadCell>
              <HeadCell $end>Creation time<SortOpen /></HeadCell>
            </HeadRow>
            <BodyRow>
              <BodyCell $first><Check /></BodyCell>
              <NameCell><DevLink>Dev</DevLink></NameCell>
              <BodyCell>1</BodyCell>
              <BodyCell>13 minutes ago</BodyCell>
              <BodyCell>36 minutes ago</BodyCell>
            </BodyRow>
          </UsersCard>
        </Main>
      </Body>

      <Footer>
        <FooterItem><SquareTerminal size={15} strokeWidth={1.8} />CloudShell</FooterItem>
        <FooterItem $ml={22}>Feedback</FooterItem>
        <PushRight>
          <FooterItem $dim>© 2024, Amazon Web Services, Inc. or its affiliates.</FooterItem>
          <FooterItem $ml={27}>Privacy</FooterItem>
          <FooterItem $ml={22}>Terms</FooterItem>
          <FooterItem $ml={23}>Cookie preferences</FooterItem>
        </PushRight>
      </Footer>

      <Taskbar>
        <StartButton><FaWindows size={17} color="#000" /></StartButton>
        <TaskSearch>
          <Search size={18} strokeWidth={1.4} style={{ transform: 'scaleX(-1)' }} />
          <TaskSearchText>Type here to search</TaskSearchText>
          <Fireplace />
          <FireGap />
        </TaskSearch>
        <TaskView><TaskViewIcon /></TaskView>
        {APPS.map((app, i) => (
          <TaskApp key={i} $bg={app.bg}>
            {app.icon}
            {app.line && <TaskLine $color={app.line} $full={app.full} $stack={app.stack} />}
          </TaskApp>
        ))}
        <Tray>
          <TrayStock><StockIcon />TMGH</TrayStock>
          <TraySlot $w={34}><ChevronUp size={18} strokeWidth={1.4} /></TraySlot>
          <TraySlot $w={34}><WifiIcon /></TraySlot>
          <TraySlot $w={26}><BatteryIcon /></TraySlot>
          <TraySlot $w={36}><Volume2 size={17} strokeWidth={1.4} /></TraySlot>
          <TraySlot $w={34}>ENG</TraySlot>
          <Clock><span>10:46 AM</span><span>12/5/2024</span></Clock>
          <Notify>
            <NotifyIcon />
            <NotifyBadge>10</NotifyBadge>
          </Notify>
        </Tray>
      </Taskbar>
    </Page>
  );
}
